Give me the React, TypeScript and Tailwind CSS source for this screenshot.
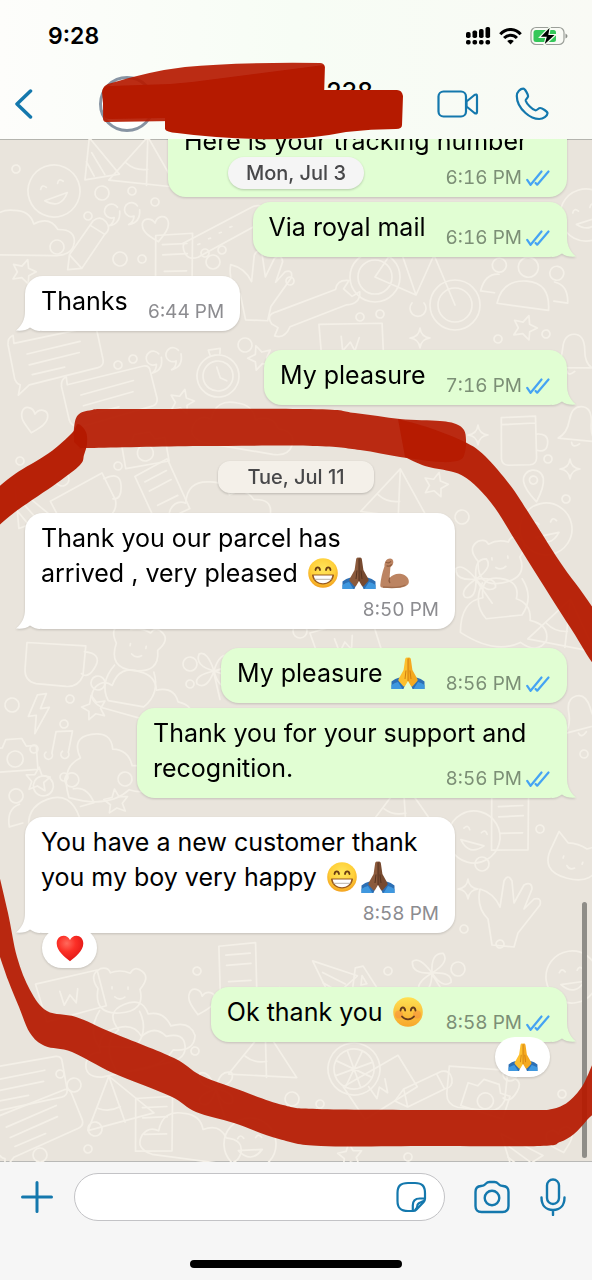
import type { ReactNode } from "react";
import clsx from "clsx";

type Point = [number, number];

interface Message {
  from: "me" | "them";
  text: ReactNode;
  time: string;
  timePlacement?: "beside" | "below" | "inline";
  tail?: boolean;
  reaction?: ReactNode;
  className?: string;
}

// Catmull-Rom through the points, closed off with a straight line
function smooth(points: Point[]) {
  let d = `M${points[0][0]} ${points[0][1]}`;
  for (let i = 0; i < points.length - 1; i++) {
    const p0 = points[Math.max(i - 1, 0)];
    const p1 = points[i];
    const p2 = points[i + 1];
    const p3 = points[Math.min(i + 2, points.length - 1)];
    d += `C${p1[0] + (p2[0] - p0[0]) / 6} ${p1[1] + (p2[1] - p0[1]) / 6} ${p2[0] - (p3[0] - p1[0]) / 6} ${
      p2[1] - (p3[1] - p1[1]) / 6
    } ${p2[0]} ${p2[1]}`;
  }
  return d + "Z";
}

function Emoji({ label, small, children }: { label: string; small?: boolean; children: ReactNode }) {
  return (
    <svg
      role="img"
      aria-label={label}
      viewBox="0 0 36 32"
      className={small ? "block h-7 w-8" : "inline-block h-8 w-9 align-[-7px]"}
    >
      {children}
    </svg>
  );
}

function EmojiGradients() {
  return (
    <svg className="absolute h-0 w-0" aria-hidden="true">
      <defs>
        <radialGradient id="face" cx="50%" cy="38%" r="62%">
          <stop offset="0" stopColor="#ffe65c" />
          <stop offset="0.65" stopColor="#ffd03a" />
          <stop offset="1" stopColor="#f3a11e" />
        </radialGradient>
        <linearGradient id="smileFace" x1="0" y1="0" x2="0" y2="1">
          <stop offset="0" stopColor="#ffe052" />
          <stop offset="1" stopColor="#f7a72b" />
        </linearGradient>
        <radialGradient id="heart" cx="38%" cy="30%" r="75%">
          <stop offset="0" stopColor="#ff6a5c" />
          <stop offset="0.45" stopColor="#fb2f26" />
          <stop offset="1" stopColor="#dd1414" />
        </radialGradient>
      </defs>
    </svg>
  );
}

function Grin() {
  return (
    <Emoji label="😁">
      <circle cx="18" cy="16" r="14.8" fill="url(#face)" />
      <path
        d="M10.500 13c.6-3.400 3.900-3.400 4.500 0M21 13c.6-3.400 3.900-3.400 4.500 0"
        fill="none"
        stroke="#6b3d12"
        strokeWidth="1.800"
        strokeLinecap="round"
      />
      <path d="M8 17.4h20c.8 0 1.2.5 1 1.2C28 24 23.7 27.5 18 27.5S8 24 7 18.600c-.2-.7.2-1.200 1-1.200z" fill="#9a5a20" />
      <path d="M8.700 18.600h18.600c-.8 4.800-4.500 7.700-9.300 7.700s-8.500-2.900-9.300-7.700z" fill="#fff" />
      <path d="M9.600 22.300h16.800" stroke="#b9b3aa" strokeWidth="1" />
    </Emoji>
  );
}

function Smile() {
  return (
    <Emoji label="😊">
      <circle cx="18" cy="16" r="14.800" fill="url(#smileFace)" />
      <circle cx="9" cy="18.500" r="4" fill="#f4743b" opacity=".35" />
      <circle cx="27" cy="18.500" r="4" fill="#f4743b" opacity=".35" />
      <path
        d="M10.500 14.500c.7-4 4-4 4.700 0M20.800 14.500c.7-4 4-4 4.700 0M12 20.500c2.800 3.700 9.200 3.700 12 0"
        fill="none"
        stroke="#663b1c"
        strokeWidth="1.800"
        strokeLinecap="round"
      />
    </Emoji>
  );
}

function Pray({ dark, small }: { dark?: boolean; small?: boolean }) {
  return (
    <Emoji label={dark ? "🙏🏾" : "🙏"} small={small}>
      <path d="M1.500 24.500Q5 21.500 9.500 20.500L15 28l-1.500 4h-12zM34.500 24.500Q31 21.500 26.500 20.500L21 28l1.500 4h12z" fill="#2c6fb4" />
      <path d="M1.500 28q3.500-2.500 6.500-3l4.500 7h-11zM34.500 28q-3.500-2.500-6.500-3l-4.500 7h11z" fill="#3f98df" />
      <path
        d="M18 .8c-1.500-.8-2.700 0-2.900 1.700L13.600 13l-5 9c-.5 1-.3 1.600.3 2.300l4.200 4.600c.8.800 1.500.7 2.100-.2L18 24z"
        fill={dark ? "#8b5a3c" : "#fdbf2d"}
      />
      <path
        d="M18 .8c1.500-.8 2.700 0 2.900 1.700L22.400 13l5 9c.5 1 .3 1.600-.3 2.300l-4.200 4.600c-.8.800-1.500.7-2.100-.2L18 24z"
        fill={dark ? "#774a30" : "#f5a91f"}
      />
      <path
        d="M18 1.500V24M16 13.500l-1 8.500M20 13.500l1 8.500"
        stroke={dark ? "#56331f" : "#d07f10"}
        strokeWidth="1"
        fill="none"
      />
    </Emoji>
  );
}

function Muscle() {
  return (
    <Emoji label="💪🏽">
      <path
        d="M8.500 4.500C9.500 1.600 13.600.4 15.300 2.300c1.600 1.800 1.300 5-.3 6.500-.9.900-1.600 1.100-1.700 2.400L12.600 21c2.500-3.300 7.600-5 12-3.900 4.800 1.300 7.800 4.700 7.200 8.300-.8 4.200-7 5.400-13 5.400H6.200c-2.400 0-3.100-1-2.900-3 .4-5 1.900-12.500 4.200-18.600-.2-1.600.2-3.200 1-4.700z"
        fill="#bc8462"
      />
      <path
        d="M12.600 21c-.8 1.700-.8 3.200.2 4.600M9 5.200c2 1 3.500.8 4.700-.6M10 8.900c1.800.7 3.200.4 4.300-1.300"
        fill="none"
        stroke="#8e5c3e"
        strokeWidth="1.200"
        strokeLinecap="round"
      />
      <path d="M6 30c5 .5 17 1 22.500-2" fill="none" stroke="#a06c4c" strokeWidth="1.400" />
    </Emoji>
  );
}

function Heart() {
  return (
    <Emoji label="❤️" small>
      <path
        d="M18 31C12 26 2.800 19.500 2.800 10.800 2.800 5.500 6.400 2 10.700 2c3.300 0 6 1.900 7.300 4.800C19.300 3.900 22 2 25.300 2c4.300 0 7.900 3.500 7.900 8.800C33.200 19.500 24 26 18 31z"
        fill="url(#heart)"
      />
    </Emoji>
  );
}

const mondayMessages: Message[] = [
  {
    from: "me",
    text: "Here is your tracking number",
    time: "6:16 PM",
    timePlacement: "below",
    className: "w-[399px]",
  },
  { from: "me", text: "Via royal mail", time: "6:16 PM", tail: true, className: "mt-[5px]" },
  { from: "them", text: "Thanks", time: "6:44 PM", tail: true, className: "mt-[19px]" },
  { from: "me", text: "My pleasure", time: "7:16 PM", tail: true, className: "mt-[19px]" },
];

const tuesdayMessages: Message[] = [
  {
    from: "them",
    text: (
      <>
        Thank you our parcel has arrived&nbsp;, very pleased <Grin />
        <Pray dark />
        <Muscle />
      </>
    ),
    time: "8:50 PM",
    timePlacement: "below",
    tail: true,
    className: "mt-5",
  },
  {
    from: "me",
    text: (
      <>
        My pleasure <Pray />
      </>
    ),
    time: "8:56 PM",
    className: "mt-[19px]",
  },
  {
    from: "me",
    text: "Thank you for your support and recognition.",
    time: "8:56 PM",
    timePlacement: "inline",
    tail: true,
    className: "mt-[5px]",
  },
  {
    from: "them",
    text: (
      <>
        You have a new customer thank you my boy very happy <Grin />
        <Pray dark />
      </>
    ),
    time: "8:58 PM",
    timePlacement: "below",
    tail: true,
    reaction: <Heart />,
    className: "mt-[19px]",
  },
  {
    from: "me",
    text: (
      <>
        Ok thank you <Smile />
      </>
    ),
    time: "8:58 PM",
    tail: true,
    reaction: <Pray small />,
    className: "mt-[54px]",
  },
];

function Ticks() {
  return (
    <svg
      viewBox="0 0 25 16"
      className="h-4 w-[25px]"
      fill="none"
      stroke="#45a3f3"
      strokeWidth="2.200"
      strokeLinecap="round"
      strokeLinejoin="round"
      aria-label="Read"
    >
      <path d="M1.200 9.800 4.600 14.800 15.500 1.500M9.600 13l1.600 1.700L22.500 1.500" />
    </svg>
  );
}

function MessageTime({ mine, time, className }: { mine: boolean; time: string; className?: string }) {
  return (
    <span
      className={clsx(
        "relative flex items-center justify-end gap-1 text-[19px] leading-6 whitespace-nowrap tabular-nums",
        mine ? "text-[#7c8f76]" : "text-[#8c8c90]",
        className,
      )}
    >
      <time>{time}</time>
      {mine && <Ticks />}
    </span>
  );
}

function Bubble({ message }: { message: Message }) {
  const { from, text, time, timePlacement = "beside", tail, reaction, className } = message;
  const mine = from === "me";

  return (
    <li
      className={clsx(
        "relative flex max-w-[430px] rounded-[18px] px-4 pt-2 pb-[7px] drop-shadow-[0_1px_1px_rgba(0,0,0,0.16)]",
        mine ? "self-end bg-[#e1fed3]" : "self-start bg-white",
        timePlacement === "beside" ? "items-end gap-5" : "flex-col",
        className,
      )}
    >
      {tail && (
        <svg
          viewBox="0 0 24 20"
          className={clsx(
            "absolute bottom-0 h-5 w-6",
            mine ? "-right-[9px] text-[#e1fed3]" : "-left-[9px] -scale-x-100 text-white",
          )}
          fill="currentColor"
          aria-hidden="true"
        >
          <path d="M15 0c0 8 2.500 14 9 19.500-6 .5-10.500-.3-14-3C6.500 19 3 20 0 20V0z" />
        </svg>
      )}
      <p className="relative pb-[5px] text-[25px] leading-[35px] text-black">
        {text}
        {timePlacement === "inline" && <MessageTime mine={mine} time={time} className="float-right mt-4 -mb-5" />}
      </p>
      {timePlacement !== "inline" && (
        <MessageTime mine={mine} time={time} className={timePlacement === "below" ? "mt-[2px]" : ""} />
      )}
      {reaction && (
        <span
          className={clsx(
            "absolute -bottom-[35px] flex h-10 w-[55px] items-center justify-center rounded-full bg-white",
            mine ? "right-[17px]" : "left-[17px]",
          )}
        >
          {reaction}
        </span>
      )}
    </li>
  );
}

// Little outline drawings scattered over the wallpaper
const shapes: Record<string, string> = {
  star: "M0-12 3.500-4 12-3 6 3 8 11 0 7-8 11-6 3-12-3-3.500-4z",
  spark: "M0-10Q1-1 10 0 1 1 0 10-1 1-10 0-1-1 0-10z",
  dot: "M-4 0a4 4 0 1 0 8 0 4 4 0 1 0-8 0",
  ring: "M-7 0a7 7 0 1 0 14 0 7 7 0 1 0-14 0",
  heart: "M0 14C-8 7-14 2-13-5-12-12-3-12 0-5 3-12 12-12 13-5 14 2 8 7 0 14z",
  quote: "M-4-8a7 7 0 1 0-4 10q-1 6-6 8 12-1 12-14M16-8a7 7 0 1 0-4 10q-1 6-6 8 12-1 12-14",
  chat: "M-40-22 38-30q6 0 6 6l3 28q0 6-6 7l-70 10-12 9 3-10q-4-2-5-7l-3-34q0-7 6-9zM-28-10 26-17M-27 1 24-6M-25 11 8 7",
  clock: "M-21 0a21 21 0 1 0 42 0 21 21 0 1 0-42 0M-15 0a15 15 0 1 0 30 0 15 15 0 1 0-30 0M0-9 2 2 8 6M-5-22-6-27 6-27 5-22",
  pencil: "M-22 14-17 0 14-28q8-4 12 4T22-12L-8 16zM-17 0-8 16M10-24 22-12",
  bike: "M-70 0a25 25 0 1 0 50 0 25 25 0 1 0-50 0M-62 0a17 17 0 1 0 34 0 17 17 0 1 0-34 0M10 28a25 25 0 1 0 50 0 25 25 0 1 0-50 0M18 28a17 17 0 1 0 34 0 17 17 0 1 0-34 0M-45 0-22-34 14-22-4 18zM-22-34-4 18M14-22 35 28M14-22 18-36 34-34M-30-36h16M-8 26a8 8 0 1 0 12 0",
  people: "M-26 16q2-24 26-26t26 26zM-10-24a10 10 0 1 0 20 0 10 10 0 1 0-20 0M-30 6h-14q2-18 16-19M30 6h14q-2-18-16-19M-36-22a7 7 0 1 0 14 0 7 7 0 1 0-14 0M22-22a7 7 0 1 0 14 0 7 7 0 1 0-14 0",
  mug: "M-20-18 14-22 18 20q0 6-6 7l-22 2q-6 0-7-6zM-19-11 14-15M16-4q12-2 12 8T18 12",
  bell: "M-16 12q8-6 8-20 0-14 10-15t12 14q1 14 9 18zM-2 14q2 6 8 0",
  note: "M-8 12V-10l16-4v22M-14 12a4 4 0 1 0 6 0M2 8a4 4 0 1 0 6 0",
  bolt: "M2-18-10 2h8L-6 20 12-4H3l8-14z",
  cup: "M-30-10 28-20 32 10q-2 12-14 14l-30 4q-12 0-14-12zM28-14q18-2 14 12t-12 10",
  face: "M-26 0a26 26 0 1 0 52 0 26 26 0 1 0-52 0M-12-6q3-5 6 0M6-6q3-5 6 0M-12 6q12 14 24 0z",
  cat: "M-24-10-22-26-10-18q10-3 20 0L22-26l3 16q4 24-25 26T-24-10zM-10-4v2M10-4v2M-4 4q4 4 8 0",
  cone: "M-16-20 22 8-10 22zM-10-6 8 12M-13 4-2 16",
  wrench: "M-44 10q-6-10 6-12l60-18q2-10 14-8l-6 8 8 8 8-4q0 12-14 12l-58 18q-6 12-16 8l4-8z",
  pill: "M-44-2 34-14q10 0 10 8t-8 10l-70 12q-10 0-11-8t3-10zM-30 4h2M-18 2h2M-6 0h2M6-2h2",
  hand: "M-18 30-22 4Q-34-8-30-26q14 4 20 18l4-26q4-8 8 0l2 22 10-18q8-4 8 4l-8 20 10-10q8-2 6 6L8 18l-4 14z",
  letterA: "M-14 16-2-18H6l12 32-8 2-3-8h-11l-2 8zM0 0h6L3-9z",
  clover: "M0 0Q-20-4-16-16-8-20 0 0 4-20 16-16 20-6 0 0 20 4 16 14 6 18 0 0-6 20-16 14-20 6 0 0M0 2 8 28",
  wheel: "M-26 0a26 26 0 1 0 52 0 26 26 0 1 0-52 0M-20 0a20 20 0 1 0 40 0 20 20 0 1 0-40 0M-20 0h40M0-20v40M-14-14 14 14M-14 14 14-14",
  cloud: "M-44 20q-18-4-12-18 6-10 16-6 2-22 24-20 16 0 20 14 16-8 24 6 18 0 16 14-2 12-18 12z",
  tent: "M-34 20-4-30 34 14zM-4-30 4 18M-20 0q10 6 22 2",
  camera: "M-22-10h10l4-8H8l4 8h10v24h-44zM-8 2a8 8 0 1 0 16 0 8 8 0 1 0-16 0",
  book: "M-24-22 12-30 20 24-16 30zM-16-14 8-19M-14-4 10-9M-10 12 12 8",
  bear: "M-22 0q-10-14 2-20 8-2 10 4 10-4 20 0 4-8 12-2t-2 18q6 22-20 24T-22 0zM-8-2v2M8-2v2M-5 8q5 4 10 0M-20 22q-12 20 0 36h36q14-16 4-36",
  note2: "M-34-14 28-26 36 10-24 24zM-10-6l4 14 6-10 6 8 2-14",
  dino: "M-40 30q-10-30 10-40-10-20 10-24t22 14q16 0 20 16 20-2 22 14-4 16-24 10-20 20-60 10z",
  pin: "M0 18Q-10 4-10-4a10 10 0 1 1 20 0Q10 4 0 18zM-4-4a4 4 0 1 0 8 0 4 4 0 1 0-8 0",
};

const doodles: [string, number, number, number?][] = [
  ["face", 54, 52], ["dot", 16, 30], ["cone", 100, 22], ["tent", 146, 28], ["ring", 102, 54], ["dot", 132, 52], ["dot", 155, 63],
  ["cloud", 30, 95], ["quote", 122, 76], ["dot", 88, 77], ["heart", 156, 89], ["pencil", 86, 112], ["ring", 57, 108], ["pill", 225, 92],
  ["star", 24, 132], ["ring", 120, 120], ["dot", 142, 120], ["book", 176, 122], ["dot", 205, 114], ["dot", 222, 111], ["ring", 213, 123],
  ["hand", 262, 150], ["bike", 420, 138, 0], ["people", 525, 152, 8], ["dot", 290, 142], ["wrench", 315, 172, -4], ["face", 586, 76],
  ["star", 525, 188], ["dot", 546, 195], ["spark", 420, 199, 0], ["note2", 350, 205], ["dot", 360, 178], ["dot", 380, 175], ["dot", 498, 200],
  ["chat", 56, 222, -6], ["quote", 164, 222, -10], ["clock", 218, 237, -8], ["dot", 118, 226], ["dot", 133, 220], ["ring", 245, 206], ["star", 260, 218],
  ["chat", 110, 262, -8], ["star", 182, 262], ["heart", 34, 280], ["cloud", 250, 290], ["bell", 570, 218], ["mug", 520, 298, 4], ["bell", 576, 290, 10],
  ["spark", 478, 296, 0], ["dot", 20, 322], ["camera", 145, 312], ["dot", 118, 327], ["book", 164, 352], ["cup", 82, 362], ["ring", 62, 340],
  ["star", 436, 345], ["tent", 398, 360], ["pin", 534, 345, -8], ["spark", 570, 330, 0], ["cone", 30, 368], ["dot", 548, 320], ["cloud", 226, 366],
  ["bear", 500, 420], ["ring", 462, 378], ["face", 546, 390], ["dot", 566, 360], ["clover", 476, 440], ["dino", 508, 478], ["tent", 566, 490],
  ["cup", 54, 520], ["bear", 138, 508], ["ring", 190, 525], ["clover", 214, 532], ["dot", 190, 545], ["ring", 300, 492], ["note2", 345, 505],
  ["bolt", 38, 574], ["ring", 12, 566], ["star", 94, 568], ["dot", 70, 560], ["ring", 98, 544], ["dot", 64, 585], ["cloud", 150, 560],
  ["note", 62, 604], ["dot", 34, 610], ["star", 38, 640], ["dino", 110, 630], ["dot", 64, 638], ["camera", 15, 618], ["star", 116, 662],
  ["bell", 578, 580], ["dot", 584, 615], ["people", 50, 670], ["ring", 125, 640], ["cat", 572, 724], ["face", 474, 698], ["dot", 540, 690],
  ["book", 512, 684], ["tent", 404, 672], ["spark", 468, 750, 0], ["hand", 510, 776], ["ring", 482, 725], ["dot", 464, 790], ["dot", 500, 805],
  ["letterA", 361, 846], ["clover", 432, 834], ["cone", 334, 836], ["dot", 388, 832], ["camera", 282, 868], ["heart", 201, 862], ["dot", 197, 832],
  ["book", 240, 832], ["ring", 458, 830], ["bear", 120, 850], ["note2", 70, 858], ["dot", 424, 856], ["face", 572, 838], ["dino", 150, 895],
  ["cloud", 140, 908], ["dot", 195, 912], ["wheel", 354, 930], ["pencil", 420, 955], ["cup", 476, 944], ["ring", 510, 935], ["tent", 265, 920],
  ["ring", 292, 960], ["dot", 320, 965], ["clover", 216, 950], ["chat", 20, 950], ["ring", 74, 946], ["tent", 118, 966], ["dot", 60, 935],
  ["chat", 36, 990], ["note2", 380, 950], ["camera", 486, 960], ["dot", 562, 955], ["ring", 95, 990], ["book", 156, 985], ["cloud", 198, 1000],
  ["dot", 88, 1010], ["ring", 40, 1016], ["face", 250, 1005], ["star", 350, 1016], ["cone", 520, 1012], ["dot", 408, 1018], ["heart", 560, 1000],
];

function Wallpaper() {
  return (
    <svg
      className="absolute inset-0 h-full w-full"
      fill="none"
      stroke="#f4f0e8"
      strokeWidth="1.700"
      strokeLinejoin="round"
      strokeLinecap="round"
      aria-hidden="true"
    >
      {doodles.map(([name, x, y, turn], i) => (
        <path key={i} d={shapes[name]} transform={`translate(${x} ${y}) rotate(${turn ?? ((i * 37) % 40) - 20})`} />
      ))}
    </svg>
  );
}

const topBand: Point[] = [
  [74, 442], [74, 428], [78, 415], [92, 410], [120, 409], [310, 409], [355, 413], [400, 419], [440, 421], [456, 424], [464, 430],
  [466, 440], [465, 452], [460, 460], [440, 462], [400, 457], [360, 450], [313, 446], [200, 446], [90, 448], [80, 448],
];

const rightArm: Point[] = [
  [398, 419], [430, 428], [465, 442], [485, 456], [510, 485], [530, 515], [560, 562], [600, 622], [600, 670], [570, 627], [540, 580],
  [515, 540], [495, 508], [478, 488], [463, 476], [449, 471], [425, 466], [405, 457],
];

const leftArm: Point[] = [
  [-6, 491], [15, 474], [49, 453], [72, 433], [78, 424], [86, 432], [87, 444], [84, 455], [80, 465], [57, 483], [15, 512], [-6, 530],
];

const bottomBand: Point[] = [
  [-4, 862], [8, 913], [17, 957], [30, 990], [47, 1011], [76, 1017], [113, 1033], [174, 1058], [200, 1075], [234, 1088], [283, 1105],
  [317, 1109], [430, 1110], [530, 1110], [552, 1109], [568, 1102], [583, 1085], [600, 1052], [600, 1102], [587, 1120], [574, 1134], [560, 1142],
  [540, 1146], [430, 1146], [321, 1146], [279, 1139], [234, 1123], [196, 1112], [170, 1096], [113, 1073], [72, 1052], [45, 1046], [30, 1033],
  [19, 1007], [8, 980], [-4, 945],
];

function MarkerStrokes() {
  return (
    <svg
      viewBox="0 0 592 1280"
      className="pointer-events-none absolute inset-0 h-full w-full"
      fill="#b51a00"
      aria-hidden="true"
    >
      {/* Crossed-out contact name */}
      <path
        d="M103 90q0-4 5-6 42-13 77-17 50-5 135-4 4 0 5 4l-1 30-150 24-68 1q-3 0-3-4z"
        opacity=".92"
      />
      <path d="M102 92q0-6 8-6l60-2 22-2 132-17v25h73q5 0 6 6l-1 29q0 4-6 4-25 0-50 3-30 6-62 7-55 1-107-6-11-1-12-4v-11l-55 1q-6 0-6-5z" />

      {/* Loop drawn round the second day */}
      <path d={smooth(topBand)} opacity=".92" />
      <path d={smooth(rightArm)} opacity=".95" />
      <path d={smooth(leftArm)} opacity=".97" />
      <path d={smooth(bottomBand)} opacity=".93" />
    </svg>
  );
}

function StatusBar() {
  return (
    <div className="flex h-[72px] items-center justify-between pr-6 pl-12 text-black">
      <time className="text-[23px] leading-7 font-semibold">9:28</time>
      <div className="flex items-center gap-2">
        <svg viewBox="0 0 25 18" className="h-[18px] w-[25px]" fill="currentColor" aria-label="Signal">
          <rect x="0" y="5" width="4.600" height="6" rx="1.800" />
          <rect x="6.500" y="3.500" width="4.600" height="7.500" rx="1.800" />
          <rect x="13" y="2" width="4.600" height="9" rx="1.800" />
          <rect x="19.500" y="0" width="4.600" height="11" rx="1.800" />
          <rect x="0" y="13" width="4.600" height="4.600" rx="1.800" />
          <rect x="6.500" y="13" width="4.600" height="4.600" rx="1.800" />
          <rect x="13" y="13" width="4.600" height="4.600" rx="1.800" />
          <rect x="19.500" y="13" width="4.600" height="4.600" rx="1.800" />
        </svg>
        <svg
          viewBox="0 0 23 17"
          className="h-[17px] w-[23px]"
          fill="none"
          stroke="currentColor"
          strokeWidth="3"
          aria-label="Wi-Fi"
        >
          <path d="M1.300 6.200C7-.1 16-.1 21.700 6.200M5.100 10c3.600-3.800 9.200-3.800 12.800 0" />
          <path d="M11.500 16.500 8.200 13c1.800-1.700 4.800-1.700 6.600 0z" fill="currentColor" stroke="none" />
        </svg>
        <svg viewBox="0 0 38 20" className="h-5 w-[38px]" aria-label="Charging">
          <rect x="1" y="1.500" width="33" height="17" rx="5" fill="none" stroke="#9b9f99" strokeWidth="1.200" />
          <path d="M35.500 7.500q2 1 2 2.500t-2 2.500z" fill="#8b8f89" />
          <rect x="3.500" y="4" width="22.500" height="12" rx="2.500" fill="#34c759" />
          <path d="M20.500 0 9.500 11.300h6.500L13.600 20 26 8.500h-7z" fill="#000" stroke="#f5fdf1" strokeWidth="1.200" />
        </svg>
      </div>
    </div>
  );
}

function ChatHeader() {
  return (
    <header className="h-[139px] shrink-0 bg-linear-to-r from-[#fdfdfb] via-[#f7fdf5] to-[#f9faf5] shadow-[0_1px_0_#b4b4ae]">
      <StatusBar />
      <div className="flex h-16 items-center pr-[43px] pl-3.5 text-[#1478ad]">
        <button type="button" aria-label="Back" className="w-[85px]">
          <svg
            viewBox="0 0 20 30"
            className="h-[30px] w-5"
            fill="none"
            stroke="currentColor"
            strokeWidth="3.500"
            strokeLinecap="round"
            strokeLinejoin="round"
          >
            <path d="M16.500 2 3 15l13.500 13" />
          </svg>
        </button>
        <div className="h-14 w-14 rounded-full border-[3px] border-[#8794a3] bg-white" />
        <h1 className="min-w-0 flex-1 pr-16 pb-6 text-right text-[25px] leading-8 font-medium text-black">238</h1>
        <button type="button" aria-label="Video call" className="mr-9">
          <svg
            viewBox="0 0 42 28"
            className="h-7 w-[42px]"
            fill="none"
            stroke="currentColor"
            strokeWidth="2.200"
            strokeLinejoin="round"
          >
            <rect x="1.500" y="1.500" width="27.500" height="25" rx="5" />
            <path d="M29.500 11.500 37.500 5q2.500-1.500 2.500 1.300v15.400q0 2.800-2.500 1.300l-8-6.500z" />
          </svg>
        </button>
        <button type="button" aria-label="Voice call">
          <svg
            viewBox="0 0 34 34"
            className="h-[34px] w-[34px]"
            fill="none"
            stroke="currentColor"
            strokeWidth="2.200"
            strokeLinejoin="round"
          >
            <path d="M8.300 1.700C5.300 1.700 1.800 4.500 1.800 9c0 6 3.800 12.700 8.700 17 4 3.600 8.700 6 13.700 6 4.300 0 8-3 8.300-5.700.2-1.700-5.500-5.300-7.300-5.300-1.900 0-3.300 2.700-4.900 2.300-2.700-.7-8.700-6.400-9.600-9.600-.4-1.600 2.400-2.800 2.400-4.500 0-1.500-3-7.500-4.800-7.500z" />
          </svg>
        </button>
      </div>
    </header>
  );
}

function Composer() {
  return (
    <footer className="shrink-0 bg-[#f6f6f6] pt-[11px] pb-3 shadow-[0_-1px_0_#b9b9b6]">
      <div className="flex items-center pr-[26px] pl-5 text-[#1478ad]">
        <button type="button" aria-label="Attach" className="mr-5">
          <svg
            viewBox="0 0 34 34"
            className="h-[34px] w-[34px]"
            fill="none"
            stroke="currentColor"
            strokeWidth="3"
            strokeLinecap="round"
          >
            <path d="M17 2.500v29M2.500 17h29" />
          </svg>
        </button>
        <div className="relative min-w-0 flex-1">
          <input
            type="text"
            aria-label="Message"
            className="block h-12 w-full rounded-full border border-[#c3c3c6] bg-white pr-14 pl-5 text-[25px] text-black outline-none"
          />
          <button type="button" aria-label="Stickers" className="absolute top-2 right-[17px]">
            <svg
              viewBox="0 0 32 32"
              className="h-8 w-8"
              fill="none"
              stroke="currentColor"
              strokeWidth="2.200"
              strokeLinejoin="round"
              strokeLinecap="round"
            >
              <path d="M12 2h7c7 0 10 3 10 10v5.500c0 1.500-.4 2.500-1.500 3.700l-7 7.300C19.500 29.600 18.500 30 17 30h-5C4.500 30 1.500 27 1.500 20v-8C1.500 5 4.500 2 12 2z" />
              <path d="M16.800 29.500v-5c0-5 2-7 7-7h5M19.500 28.500c2.300-1.500 1.500-3.500 2.200-5s3.500-2 6-3.500" />
            </svg>
          </button>
        </div>
        <button type="button" aria-label="Camera" className="ml-[29px]">
          <svg
            viewBox="0 0 36 34"
            className="h-[34px] w-9"
            fill="none"
            stroke="currentColor"
            strokeWidth="2.400"
            strokeLinejoin="round"
          >
            <path d="M1.500 12c0-4 2-5.800 5.500-6 3.500-.2 3.500-1 5-2.500 1-1.100 2-1.500 3.500-1.500h5c1.500 0 2.500.4 3.500 1.500C25.500 5 25.500 5.800 29 6c3.500.2 5.500 2 5.500 6v14c0 4-2 6-6 6h-21c-4 0-6-2-6-6z" />
            <circle cx="18" cy="18" r="7.300" />
          </svg>
        </button>
        <button type="button" aria-label="Record voice message" className="ml-[30px]">
          <svg
            viewBox="0 0 26 38"
            className="h-[38px] w-[26px]"
            fill="none"
            stroke="currentColor"
            strokeWidth="2.400"
            strokeLinecap="round"
          >
            <rect x="7" y="1.500" width="12" height="24.500" rx="6" />
            <path d="M1.500 19.500C1.500 27.500 6 32 13 32s11.500-4.500 11.500-12.500M13 32v5" />
          </svg>
        </button>
      </div>
      <div className="mx-auto mt-[39px] h-2 w-[212px] rounded-full bg-black" />
    </footer>
  );
}

export default function App() {
  return (
    <div className="relative flex h-screen flex-col overflow-hidden bg-[#e9e4dc] font-['Inter',sans-serif]">
      <EmojiGradients />
      <ChatHeader />

      <main className="relative flex min-h-0 flex-1 flex-col justify-end overflow-hidden">
        <Wallpaper />
        <ol className="relative flex flex-col px-[25px] pb-[120px]">
          {mondayMessages.map((message, i) => (
            <Bubble key={i} message={message} />
          ))}
          <li className="mt-14 self-center rounded-xl bg-[#f4f0e9] px-[29px] text-[20px] leading-8 font-medium text-[#48484a] drop-shadow-[0_1px_1px_rgba(0,0,0,0.2)]">
            Tue, Jul 11
          </li>
          {tuesdayMessages.map((message, i) => (
            <Bubble key={i} message={message} />
          ))}
        </ol>

        {/* Floating date of the topmost visible day */}
        <div className="absolute top-[18px] left-1/2 -translate-x-1/2 rounded-2xl bg-[#f5f5f5] px-[18px] text-[20px] leading-8 font-medium whitespace-nowrap text-[#48484a] drop-shadow-[0_1px_1px_rgba(0,0,0,0.2)]">
          Mon, Jul 3
        </div>
        <div className="absolute right-[5px] bottom-1 h-64 w-[5px] rounded-full bg-[#8f8d88]" />
      </main>

      <Composer />
      <MarkerStrokes />
    </div>
  );
}
